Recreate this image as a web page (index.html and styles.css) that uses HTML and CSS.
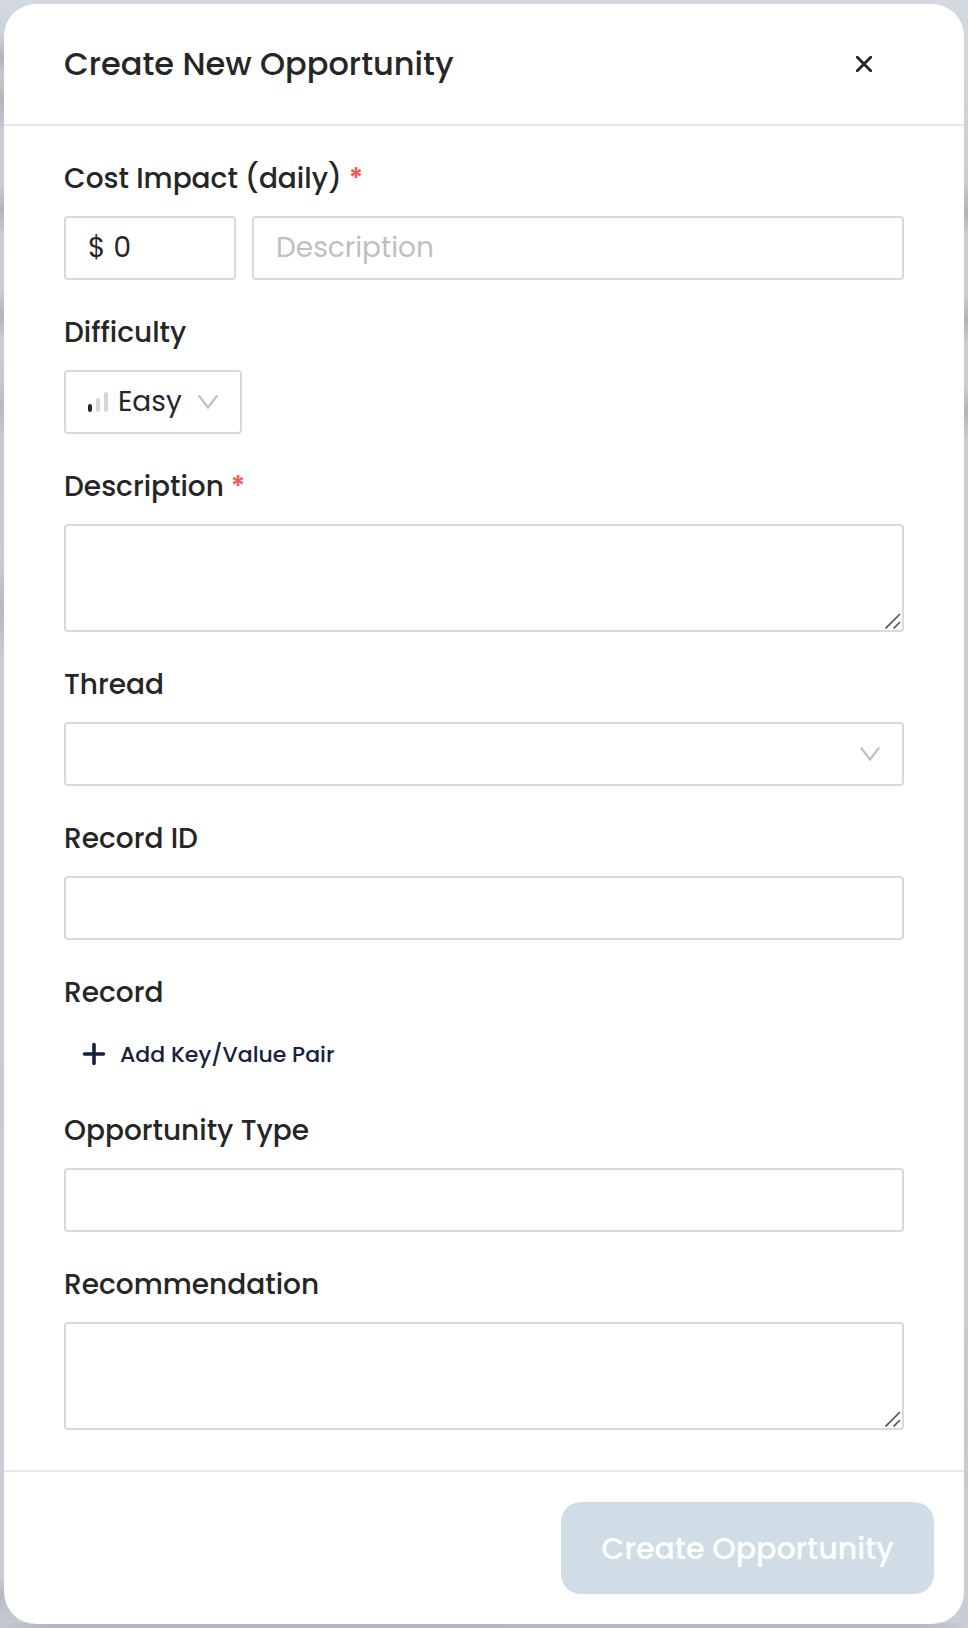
FILE: index.html
```html
<!DOCTYPE html>
<html lang="en">
<head>
<meta charset="utf-8">
<title>Create New Opportunity</title>
<link rel="stylesheet" href="styles.css">
</head>
<body>
<div class="backdrop">
  <main class="modal">
    <header class="modal-header">
      <h1 class="title">Create New Opportunity</h1>
      <button class="close" aria-label="Close">
        <svg width="16" height="16" viewBox="0 0 16 16"><path d="M1.3 1.3 14.7 14.7M14.7 1.3 1.3 14.7"/></svg>
      </button>
    </header>
    <form class="modal-body">
      <div class="field">
        <div class="label"><span>Cost Impact (daily)</span><span class="required">*</span></div>
        <div class="row">
          <div class="control amount"><span class="currency">$</span><span>0</span></div>
          <div class="control note"><span class="placeholder">Description</span></div>
        </div>
      </div>
      <div class="field">
        <div class="label"><span>Difficulty</span></div>
        <div class="control difficulty">
          <svg class="bars" width="20" height="20" viewBox="0 0 20 20"><rect class="on" x="0" y="12" width="4" height="8" rx="2"/><rect x="8" y="6" width="4" height="14" rx="2"/><rect x="16" y="0" width="4" height="20" rx="2"/></svg>
          <span>Easy</span>
          <svg class="chevron" width="20" height="14" viewBox="0 0 20 14"><path d="M.8.5 10 12.5 19.2.5"/></svg>
        </div>
      </div>
      <div class="field">
        <div class="label"><span>Description</span><span class="required">*</span></div>
        <div class="control area"><svg class="grip" width="16" height="16" viewBox="0 0 16 16"><path d="M.5 15.5 15 1M8.5 15.5 15 9"/></svg></div>
      </div>
      <div class="field">
        <div class="label"><span>Thread</span></div>
        <div class="control"><svg class="chevron" width="20" height="14" viewBox="0 0 20 14"><path d="M.8.5 10 12.5 19.2.5"/></svg></div>
      </div>
      <div class="field">
        <div class="label"><span>Record ID</span></div>
        <div class="control"></div>
      </div>
      <div class="field">
        <div class="label"><span>Record</span></div>
        <div class="add-pair">
          <svg width="24" height="24" viewBox="0 0 24 24"><path d="M12 2.5v19M2.5 12h19"/></svg>
          <span>Add Key/Value Pair</span>
        </div>
      </div>
      <div class="field">
        <div class="label"><span>Opportunity Type</span></div>
        <div class="control"></div>
      </div>
      <div class="field">
        <div class="label"><span>Recommendation</span></div>
        <div class="control area"><svg class="grip" width="16" height="16" viewBox="0 0 16 16"><path d="M.5 15.5 15 1M8.5 15.5 15 9"/></svg></div>
      </div>
    </form>
    <footer class="modal-footer"><button class="submit">Create Opportunity</button></footer>
  </main>
</div>
</body>
</html>
```

FILE: styles.css
```css
* { box-sizing: border-box; }
body {
  margin: 0;
  font-family: Poppins, Inter, sans-serif;
  font-size: 28px;
  color: #262626;
}
button { font: inherit; border: 0; padding: 0; }
.backdrop {
  height: 1628px;
  padding: 4px;
  background:
    linear-gradient(90deg, #c5c8d1, #b3b5bf 5%, #b6b8c2 95%, #c9cdd6) 0 100% / 100% 5px no-repeat,
    linear-gradient(#d3d9e1 0, #ccd2da 36px, #b0b4ba 58px, #c5c9d1 76px, #b0b4bb 102px, #cbcdd6 134px, #cbccd5 184px, #b1b4bb 208px, #cbcdd5 236px, #cbccd5 290px, #b1b4bb 315px, #cbcdd5 340px, #c3c8d0 385px, #b5bac2 405px, #c8cbd4 440px, #c6cbd3 570px, #b4b9c1 610px, #cbcdd6 660px, #c7cbd3 1100px, #cbcdd6 1500px, #cbcdd6 1575px, #b6bac1 1595px, #c9cdd6 1628px) 0 0 / 50% 100% no-repeat,
    linear-gradient(#d3d9e1 0, #d0d6de 60px, #c9cdd6 180px, #adb2bb 211px, #c9cdd6 236px, #c9ccd5 295px, #b0b4bd 319px, #c9cdd6 345px, #c9cdd6 385px, #b1b5be 411px, #c9cdd6 440px, #c9cdd6 1200px, #c5cad3 1400px, #cbcdd6 1628px) 100% 0 / 50% 100% no-repeat;
}
.modal {
  width: 960px;
  height: 1620px;
  display: flex;
  flex-direction: column;
  background: #fff;
  border-radius: 32px;
}
.modal-header {
  height: 122px;
  display: flex;
  align-items: center;
  justify-content: space-between;
  padding: 0 92px 0 60px;
  border-bottom: 2px solid #e5e5eb;
}
.title { margin: 0; font-size: 32px; font-weight: 500; }
.close { display: flex; background: none; }
.close path { fill: none; stroke: #262626; stroke-width: 2.9; stroke-linecap: round; }
.modal-body { flex: 1; padding: 0 60px; }
.label {
  height: 90px;
  padding: 30px 0 14px;
  display: flex;
  align-items: center;
  font-weight: 500;
  line-height: 44px;
}
.required { margin-left: 7px; color: #f15950; font-weight: 600; }
.row { display: flex; gap: 16px; }
.control {
  height: 64px;
  display: flex;
  align-items: center;
  border: 2px solid #d9d9d9;
  border-radius: 4px;
  padding: 0 22px;
}
.amount { width: 172px; }
.currency { margin-right: 8px; }
.note { flex: 1; }
.placeholder { color: #bfbfbf; }
.difficulty { width: 178px; }
.bars { margin-right: 10px; fill: #d6d6d6; }
.bars .on { fill: #262626; }
.chevron { margin-left: auto; fill: none; stroke: #bfbfbf; stroke-width: 2.2; }
.area { height: 108px; padding: 0 1px 1px 0; align-items: flex-end; justify-content: flex-end; }
.grip { fill: none; stroke: #555; stroke-width: 1.7; }
.add-pair {
  height: 48px;
  display: flex;
  align-items: center;
  padding-left: 18px;
  color: #16213e;
  font-size: 22px;
  font-weight: 500;
  gap: 14px;
}
.add-pair path { fill: none; stroke: #16213e; stroke-width: 3.6; stroke-linecap: round; }
.modal-footer {
  height: 154px;
  display: flex;
  justify-content: flex-end;
  padding: 30px 30px 0;
  border-top: 2px solid #e5e5eb;
}
.submit {
  width: 373px;
  height: 92px;
  padding-top: 2px;
  border-radius: 20px;
  background: #d1dde6;
  color: #fff;
  font-size: 30px;
  font-weight: 500;
}
```
